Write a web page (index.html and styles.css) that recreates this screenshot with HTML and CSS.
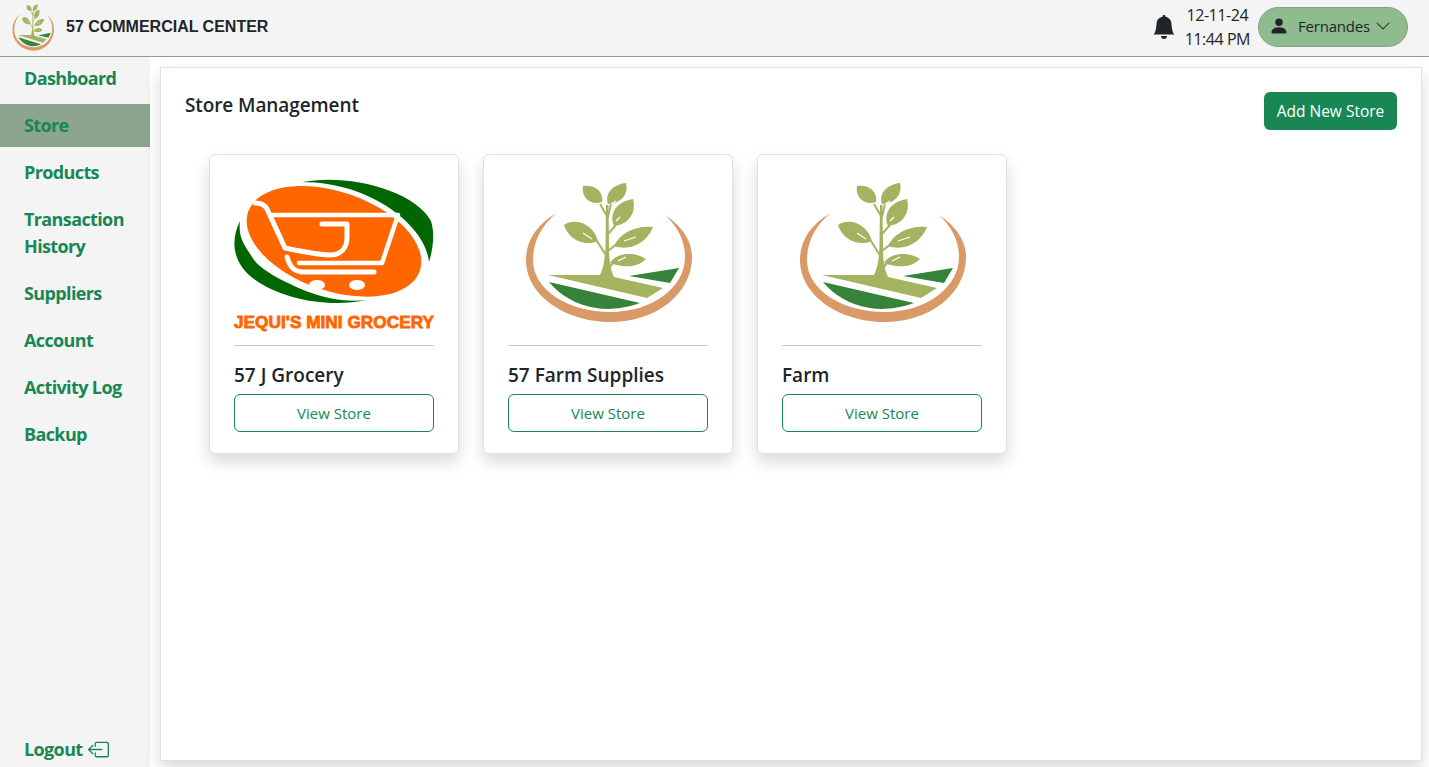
FILE: index.html
```html
<!DOCTYPE html>
<html lang="en">
<head>
<meta charset="utf-8">
<title>57 Commercial Center</title>
<link rel="stylesheet" href="styles.css">
</head>
<body>
<header class="topbar">
  <div class="brand">
    <svg class="brand-logo" viewBox="0 0 200 150" preserveAspectRatio="none">
      <g id="farm">
        <path fill="#d99a68" d="M48.700 34C28 46 18 62 18 81c0 37 42 62 84 62 46 0 82-28 82-65 0-18-12-32-27-42 13 12 20 26 20 42 0 30-32 55-75 55-40 0-77-21-77-52 0-19 9-35 23.700-47z"/>
        <path fill="#a3b35f" d="M40 96H92C96 88 97 78 97.500 68L98 26h2.500L101 68C101 80 102 90 106 98L155 109 139 119z"/>
        <path fill="#37833a" d="M41 103 132 124C115 130 100 131 88 129 68 126 52 116 41 103zM121 97 171 89 162 104z"/>
        <path fill="none" stroke="#a3b35f" stroke-width="2" d="M99 37 92 25M100 38 103 25M100 55 108 46M99 78 89 62M100 72 110 64M100 90 105 84"/>
        <path fill="#a3b35f" d="M75 7C88 5 96 14 94 23 82 27 73 18 75 7zM118 4C121 16 112 25 100 25 96 14 106 5 118 4zM125 20C129 34 120 46 106 47 100 34 110 22 125 20zM56 46C68 38 86 46 90 62 76 68 60 60 56 46zM145 48C138 66 120 72 106 67 112 54 128 46 145 48zM138 80C128 90 112 88 102 84 108 74 126 72 138 80z"/>
        <path fill="none" stroke="#fff" stroke-width="1.200" d="M108 22 103 25M112 38 108 42M128 58 116 62M75 54 84 60M118 78 110 82"/>
      </g>
    </svg>
    <span class="brand-name">57 COMMERCIAL CENTER</span>
  </div>
  <div class="top-tools">
    <svg class="bell" viewBox="0 0 16 16"><path d="M8 16a2 2 0 0 0 2-2H6a2 2 0 0 0 2 2m.995-14.901a1 1 0 1 0-1.990 0A5 5 0 0 0 3 6c0 1.098-.5 6-2 7h14c-1.500-1-2-5.902-2-7 0-2.420-1.720-4.440-4.005-4.901"/></svg>
    <div class="clock"><div>12-11-24</div><div>11:44 PM</div></div>
    <div class="user-pill">
      <svg class="person" viewBox="0 0 16 16"><path d="M3 14s-1 0-1-1 1-4 6-4 6 3 6 4-1 1-1 1zm5-6a3 3 0 1 0 0-6 3 3 0 0 0 0 6"/></svg>
      <span class="user-name">Fernandes</span>
      <svg class="chevron" viewBox="0 0 16 16"><path fill-rule="evenodd" d="M1.646 4.646a.5.5 0 0 1 .708 0L8 10.293l5.646-5.647a.5.5 0 0 1 .708.708l-6 6a.5.5 0 0 1-.708 0l-6-6a.5.5 0 0 1 0-.708"/></svg>
    </div>
  </div>
</header>
<div class="shell">
  <nav class="sidebar">
    <a class="nav-link">Dashboard</a>
    <a class="nav-link active">Store</a>
    <a class="nav-link">Products</a>
    <a class="nav-link">Transaction History</a>
    <a class="nav-link">Suppliers</a>
    <a class="nav-link">Account</a>
    <a class="nav-link">Activity Log</a>
    <a class="nav-link">Backup</a>
    <a class="nav-link logout">Logout
      <svg class="logout-icon" viewBox="0 0 16 16"><path d="M6 12.500a.5.5 0 0 0 .5.5h8a.5.5 0 0 0 .5-.5v-9a.5.5 0 0 0-.5-.5h-8a.5.5 0 0 0-.5.5v2a.5.5 0 0 1-1 0v-2A1.500 1.500 0 0 1 6.500 2h8A1.500 1.500 0 0 1 16 3.500v9a1.500 1.500 0 0 1-1.500 1.500h-8A1.500 1.500 0 0 1 5 12.500v-2a.5.5 0 0 1 1 0z"/><path d="M.146 8.354a.5.5 0 0 1 0-.708l3-3a.5.5 0 1 1 .708.708L1.707 7.500H10.500a.5.5 0 0 1 0 1H1.707l2.147 2.146a.5.5 0 0 1-.708.708z"/></svg>
    </a>
  </nav>
  <main class="content">
    <section class="panel">
      <div class="panel-head">
        <h1 class="panel-title">Store Management</h1>
        <button class="btn-add">Add New Store</button>
      </div>
      <div class="stores">
        <article class="store-card">
          <svg class="store-logo" viewBox="0 0 200 150">
            <path fill="#006600" d="M67.700 3.300C110-6 180 10 197 42c4 13 2 28-2 41-2-23-25-48-55-63C120 9 90 2 67.700 3.300zM6 42C-3 60-2 80 15 96c25 22 75 34 118 25-33 4-63-9-79-17-16-8-30-16-36-26C11 66 4 60 6 42z"/>
            <ellipse class="grocery-oval" cx="100" cy="62.300" rx="90.800" ry="49.500" transform="rotate(19 100 62.300)"/>
            <g fill="none" stroke="#fff" stroke-linecap="round" stroke-linejoin="round">
              <path stroke-width="5" d="M21 24C28 24 31 26 33 30L51 69C70 73 85 76 96 76 108 76 113 68 113 58V45H88"/>
              <path stroke-width="4.500" d="M39 36H164L148 84H65"/>
              <path stroke-width="5" d="M53 78C56 88 60 93 70 93H140"/>
            </g>
            <ellipse cx="83" cy="106" rx="8" ry="5" fill="#fff"/>
            <ellipse cx="123" cy="106" rx="8" ry="5" fill="#fff"/>
            <text class="grocery-mark" x="0" y="149" textLength="200" lengthAdjust="spacingAndGlyphs">JEQUI'S MINI GROCERY</text>
          </svg>
          <hr class="rule">
          <h2 class="store-name">57 J Grocery</h2>
          <button class="btn-view">View Store</button>
        </article>
        <article class="store-card">
          <svg class="store-logo" viewBox="0 0 200 150"><use href="#farm"/></svg>
          <hr class="rule">
          <h2 class="store-name">57 Farm Supplies</h2>
          <button class="btn-view">View Store</button>
        </article>
        <article class="store-card">
          <svg class="store-logo" viewBox="0 0 200 150"><use href="#farm"/></svg>
          <hr class="rule">
          <h2 class="store-name">Farm</h2>
          <button class="btn-view">View Store</button>
        </article>
      </div>
    </section>
  </main>
</div>
</body>
</html>
```
FILE: styles.css
```css
* { box-sizing: border-box; }
html, body { margin: 0; height: 100%; }
body {
  display: flex;
  flex-direction: column;
  height: 100vh;
  overflow: hidden;
  background: #fff;
  color: #212529;
  font-family: "Open Sans", "Noto Sans", sans-serif;
  font-size: 16px;
  line-height: 1.5;
}
.topbar {
  flex: none;
  height: 57px;
  display: flex;
  align-items: center;
  justify-content: space-between;
  padding: 0 21px 2px 8px;
  background: #f4f4f4;
  border-bottom: 1px solid #7fa87f;
}
.brand { display: flex; align-items: center; gap: 8px; }
.brand-logo { width: 50px; height: 50px; display: block; margin-top: 2px; }
.brand-name {
  font-family: "Liberation Sans", Arial, sans-serif;
  font-weight: 700;
  font-size: 16px;
}
.top-tools { display: flex; align-items: center; }
.bell { width: 24px; height: 24px; fill: #212529; margin-right: 9px; }
.clock { font-size: 16px; line-height: 24px; text-align: center; letter-spacing: -.45px; margin-right: 8px; }
.user-pill {
  width: 150px;
  height: 40px;
  display: flex;
  align-items: center;
  padding: 0 0 2px 10px;
  background: #8fbc8f;
  border: 1px solid #8a9f8a;
  border-radius: 20px;
}
.person { width: 20px; height: 20px; fill: #212529; flex: none; }
.user-name { margin-left: 9px; font-size: 15px; letter-spacing: -.2px; }
.chevron { width: 16px; height: 16px; fill: #212529; margin-left: 5px; }
.shell { flex: 1; display: flex; min-height: 0; }
.sidebar {
  flex: none;
  width: 150px;
  display: flex;
  flex-direction: column;
  gap: 4px;
  background: #f4f4f4;
}
.nav-link {
  padding: 8px 24px;
  color: #198754;
  font-size: 18px;
  font-weight: 700;
  line-height: 27px;
  letter-spacing: -.62px;
}
.nav-link.active { background: #8da48e; }
.logout { margin-top: auto; padding-bottom: 4px; padding-right: 0; display: flex; align-items: center; gap: 5px; }
.logout-icon { width: 21px; height: 21px; fill: #198754; }
.content { flex: 1; min-width: 0; padding: 10px 7px 6px 10px; }
.panel {
  height: 100%;
  padding: 24px;
  background: #fff;
  border: 1px solid #dee2e6;
  box-shadow: 0 8px 16px rgba(0, 0, 0, .15);
}
.panel-head { display: flex; justify-content: space-between; align-items: flex-start; }
.panel-title { margin: 0; font-size: 19px; font-weight: 600; line-height: 26px; letter-spacing: -.1px; }
.btn-add {
  width: 133px;
  height: 38px;
  padding: 2px 0 0;
  border: 0;
  border-radius: 6px;
  background: #198754;
  color: #fff;
  font: inherit;
  font-size: 15.5px;
}
.stores { display: flex; gap: 24px; padding: 24px 0 0 24px; }
.store-card {
  width: 250px;
  height: 300px;
  padding: 24px;
  background: #fff;
  border: 1px solid #dee2e6;
  border-radius: 6px;
  box-shadow: 0 8px 16px rgba(0, 0, 0, .15);
}
.store-logo { display: block; width: 200px; height: 150px; overflow: visible; }
.grocery-oval { fill: #ff6600; stroke: #fff; stroke-width: 6px; paint-order: stroke; }
.grocery-mark {
  font-family: "Liberation Sans", Arial, sans-serif;
  font-weight: 700;
  font-size: 17px;
  fill: #ff6600;
  stroke: #ff6600;
  stroke-width: .8px;
}
.rule { margin: 16px 0 17px; border: 0; border-top: 1px solid #c8c9ca; }
.store-name { margin: 0 0 7px; font-size: 19px; font-weight: 600; line-height: 24px; }
.btn-view {
  display: block;
  width: 100%;
  height: 38px;
  padding: 0;
  border: 1px solid #198754;
  border-radius: 6px;
  background: #fff;
  color: #198754;
  font: inherit;
  font-size: 15px;
}
```
